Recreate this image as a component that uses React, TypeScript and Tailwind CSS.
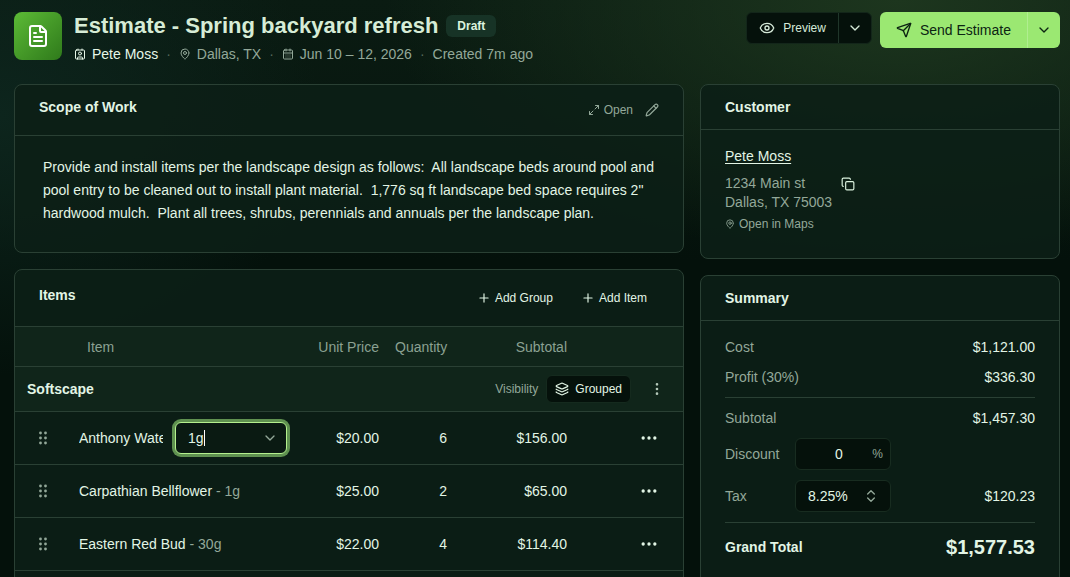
import { useState } from "react";
import {
  CalendarDays,
  ChevronDown,
  ChevronsUpDown,
  Contact,
  Copy,
  Ellipsis,
  EllipsisVertical,
  Eye,
  FileText,
  Layers,
  MapPin,
  Maximize2,
  Pencil,
  Plus,
  Send,
} from "lucide-react";

interface LineItem {
  name: string;
  size: string;
  price: string;
  quantity: number;
  subtotal: string;
  editing?: boolean;
}

const items: LineItem[] = [
  { name: "Anthony Waterer Spirea", size: "1g", price: "$20.00", quantity: 6, subtotal: "$156.00", editing: true },
  { name: "Carpathian Bellflower", size: "1g", price: "$25.00", quantity: 2, subtotal: "$65.00" },
  { name: "Eastern Red Bud", size: "30g", price: "$22.00", quantity: 4, subtotal: "$114.40" },
];

const scope =
  'Provide and install items per the landscape design as follows:  All landscape beds around pool and pool entry to be cleaned out to install plant material.  1,776 sq ft landscape bed space requires 2" hardwood mulch.  Plant all trees, shrubs, perennials and annuals per the landscape plan.';

const cardClass = "rounded-lg border border-[#2a4034] bg-[#0c1f16]/90";

function GripIcon() {
  return (
    <svg width="16" height="16" viewBox="0 0 16 16" fill="currentColor" aria-hidden="true">
      {[3, 8, 13].map((y) => (
        <g key={y}>
          <circle cx="5.5" cy={y} r="1.4" />
          <circle cx="10.5" cy={y} r="1.4" />
        </g>
      ))}
    </svg>
  );
}

function Header() {
  return (
    <header className="flex items-start justify-between">
      <div className="flex gap-3">
        <div className="flex size-12 items-center justify-center rounded-lg bg-linear-to-br from-[#5cbb36] to-[#2f7a1b] text-white">
          <FileText size={24} />
        </div>
        <div>
          <div className="flex items-center gap-2">
            <h1 className="text-[22px] leading-7 font-bold text-[#d6ecd6]">Estimate - Spring backyard refresh</h1>
            <span className="rounded-md bg-[#173326] px-[11px] py-[3px] text-xs font-bold text-[#dcf3df]">Draft</span>
          </div>
          <div className="mt-1 flex items-center gap-2 text-sm text-[#93a899]">
            <a href="#customer" className="flex items-center gap-1.5 text-[#e6f7e8]">
              <Contact size={12} />
              Pete Moss
            </a>
            <span className="text-[#56695c]">·</span>
            <span className="flex items-center gap-1.5">
              <MapPin size={12} />
              Dallas, TX
            </span>
            <span className="text-[#56695c]">·</span>
            <span className="flex items-center gap-1.5">
              <CalendarDays size={12} />
              Jun 10 – 12, 2026
            </span>
            <span className="text-[#56695c]">·</span>
            <span>Created 7m ago</span>
          </div>
        </div>
      </div>

      <div className="flex items-start gap-2">
        <div className="flex h-8 rounded-md border border-[#13261a] bg-[#05110b] text-xs text-[#d6ead9]">
          <button type="button" className="flex items-center gap-2 px-3">
            <Eye size={16} />
            Preview
          </button>
          <button type="button" aria-label="Preview options" className="border-l border-[#20362a] px-2">
            <ChevronDown size={16} />
          </button>
        </div>
        <div className="flex h-9 rounded-md bg-[#9be872] text-sm text-[#0c2412]">
          <button type="button" className="flex items-center gap-2 px-4">
            <Send size={16} />
            Send Estimate
          </button>
          <button type="button" aria-label="Send options" className="border-l border-[#b0ee90] px-2">
            <ChevronDown size={16} />
          </button>
        </div>
      </div>
    </header>
  );
}

function ScopeCard() {
  return (
    <section className={cardClass}>
      <div className="flex items-start justify-between border-b border-[#2a4034] px-6 py-3">
        <h2 className="text-sm font-bold">Scope of Work</h2>
        <div className="flex h-[26px] items-center gap-3 text-[#93a899]">
          <button type="button" className="flex items-center gap-1 text-xs">
            <Maximize2 size={12} />
            Open
          </button>
          <button type="button" aria-label="Edit scope">
            <Pencil size={14} />
          </button>
        </div>
      </div>
      <p className="px-7 pt-5 pb-7 text-sm leading-relaxed whitespace-pre-wrap">{scope}</p>
    </section>
  );
}

function SizeField({ value, name }: { value: string; name: string }) {
  const [size, setSize] = useState(value);

  return (
    <div className="flex h-8 w-28 shrink-0 items-center rounded-md border border-[#b4f08e] bg-[#0a1a12] px-3 ring-3 ring-[#5f9150]">
      <input
        aria-label={`Size of ${name}`}
        value={size}
        onChange={(e) => setSize(e.target.value)}
        className="field-sizing-content caret-transparent outline-none"
      />
      <span className="h-4 w-px bg-white" />
      <ChevronDown size={16} className="-mr-1 ml-auto text-[#93a899]" />
    </div>
  );
}

function ItemsCard() {
  return (
    <section className={`${cardClass} pb-12`}>
      <div className="flex items-start justify-between border-b border-[#2a4034] px-6 py-3">
        <h2 className="text-sm leading-[26px] font-bold">Items</h2>
        <div className="flex h-8 gap-1 text-xs">
          <button type="button" className="flex items-center gap-1 px-3">
            <Plus size={14} />
            Add Group
          </button>
          <button type="button" className="flex items-center gap-1 px-3">
            <Plus size={14} />
            Add Item
          </button>
        </div>
      </div>

      <table className="w-full table-fixed text-sm">
        <colgroup>
          <col className="w-14" />
          <col />
          <col className="w-[77px]" />
          <col className="w-[68px]" />
          <col className="w-[120px]" />
          <col className="w-[108px]" />
        </colgroup>
        <thead>
          <tr className="h-[39px] border-b border-[#2a4034] bg-[#10251a] text-[#8ba192]">
            <th />
            <th className="px-4 text-left font-normal">Item</th>
            <th className="px-2 text-right font-normal whitespace-nowrap">Unit Price</th>
            <th className="px-2 text-right font-normal">Quantity</th>
            <th className="px-2 text-right font-normal">Subtotal</th>
            <th />
          </tr>
        </thead>
        <tbody>
          <tr className="h-[45px] border-b border-[#2a4034] bg-[#10251a]">
            <td colSpan={6} className="px-3">
              <div className="flex items-center">
                <span className="font-bold">Softscape</span>
                <span className="mr-2 ml-auto text-xs text-[#93a899]">Visibility</span>
                <button
                  type="button"
                  className="mr-3 flex h-7 items-center gap-1.5 rounded-md border border-[#152a1e] bg-[#05110b] px-2 text-xs"
                >
                  <Layers size={14} />
                  Grouped
                </button>
                <button
                  type="button"
                  aria-label="Group options"
                  className="flex size-7 items-center justify-center text-[#b4c8b9]"
                >
                  <EllipsisVertical size={16} />
                </button>
              </div>
            </td>
          </tr>
          {items.map((item) => (
            <tr key={item.name} className="h-[53px] border-b border-[#2a4034]">
              <td>
                <button
                  type="button"
                  aria-label={`Move ${item.name}`}
                  className="flex w-full justify-center text-[#93a899]"
                >
                  <GripIcon />
                </button>
              </td>
              <td className="px-2">
                {item.editing ? (
                  <div className="mr-[15px] flex items-center gap-3">
                    <span className="min-w-0 flex-1 overflow-hidden whitespace-nowrap">{item.name}</span>
                    <SizeField value={item.size} name={item.name} />
                  </div>
                ) : (
                  <span>
                    {item.name} <span className="text-[#93a899]">- {item.size}</span>
                  </span>
                )}
              </td>
              <td className="px-2 text-right">{item.price}</td>
              <td className="px-2 text-right">{item.quantity}</td>
              <td className="px-2 text-right">{item.subtotal}</td>
              <td className="pr-4">
                <button
                  type="button"
                  aria-label={`Options for ${item.name}`}
                  className="ml-auto flex size-9 items-center justify-center"
                >
                  <Ellipsis size={20} />
                </button>
              </td>
            </tr>
          ))}
        </tbody>
      </table>
    </section>
  );
}

function CustomerCard() {
  return (
    <section id="customer" className={cardClass}>
      <div className="border-b border-[#2a4034] px-6 py-3">
        <h2 className="text-sm font-bold">Customer</h2>
      </div>
      <div className="px-6 pt-4 pb-[26px] text-sm">
        <a href="#pete-moss" className="underline underline-offset-2">
          Pete Moss
        </a>
        <div className="mt-2 flex items-start gap-1 text-[#93a899]">
          <address className="leading-[19px] not-italic">
            1234 Main st
            <br />
            Dallas, TX 75003
          </address>
          <button
            type="button"
            aria-label="Copy address"
            className="flex h-5 w-6 items-center justify-center text-[#dcf3df]"
          >
            <Copy size={14} />
          </button>
        </div>
        <a href="#maps" className="mt-1 flex items-center gap-1 text-xs text-[#93a899]">
          <MapPin size={10} />
          Open in Maps
        </a>
      </div>
    </section>
  );
}

function SummaryCard() {
  const [discount, setDiscount] = useState("0");

  return (
    <section className={cardClass}>
      <div className="border-b border-[#2a4034] px-6 py-3">
        <h2 className="text-sm font-bold">Summary</h2>
      </div>
      <div className="space-y-2.5 px-6 pt-4 pb-6 text-sm">
        <div className="flex justify-between">
          <span className="text-[#93a899]">Cost</span>
          <span>$1,121.00</span>
        </div>
        <div className="flex justify-between">
          <span className="text-[#93a899]">Profit (30%)</span>
          <span>$336.30</span>
        </div>
        <hr className="border-[#2a4034]" />
        <div className="flex justify-between">
          <span className="text-[#93a899]">Subtotal</span>
          <span>$1,457.30</span>
        </div>
        <div className="flex items-center">
          <label htmlFor="discount" className="w-[70px] text-[#93a899]">
            Discount
          </label>
          <div className="relative w-24">
            <input
              id="discount"
              value={discount}
              onChange={(e) => setDiscount(e.target.value)}
              className="h-8 w-full rounded-md border border-[#182c20] bg-[#05110b] pr-3 pl-1 text-center"
            />
            <span className="absolute top-2 right-2 text-xs text-[#93a899]">%</span>
          </div>
        </div>
        <div className="flex items-center">
          <label htmlFor="tax" className="w-[70px] text-[#93a899]">
            Tax
          </label>
          <div className="relative w-24">
            <select
              id="tax"
              className="h-8 w-full appearance-none rounded-md border border-[#182c20] bg-[#05110b] px-3"
            >
              <option>8.25%</option>
            </select>
            <ChevronsUpDown size={16} className="pointer-events-none absolute top-2 right-3 text-[#93a899]" />
          </div>
          <span className="ml-auto">$120.23</span>
        </div>
        <hr className="border-[#2a4034]" />
        <div className="flex items-center justify-between font-bold">
          <span>Grand Total</span>
          <span className="text-xl">$1,577.53</span>
        </div>
      </div>
    </section>
  );
}

export default function App() {
  return (
    <div className="h-screen overflow-y-auto bg-[#04110b] bg-[radial-gradient(ellipse_48%_45%_at_84%_0%,#1d361e,transparent),radial-gradient(ellipse_30%_45%_at_0%_20%,#0d251d,transparent),linear-gradient(to_bottom,#0a1b12,#081810_20%,transparent_45%)] font-['Liberation_Sans',Arial,sans-serif] text-[#e2f5e5] [scrollbar-width:none]">
      <div className="pt-3 pr-2.5 pb-6 pl-3.5">
        <Header />
        <main className="mt-5 grid grid-cols-[minmax(0,1fr)_360px] items-start gap-4">
          <div className="space-y-4">
            <ScopeCard />
            <ItemsCard />
          </div>
          <div className="space-y-4">
            <CustomerCard />
            <SummaryCard />
          </div>
        </main>
      </div>
    </div>
  );
}
